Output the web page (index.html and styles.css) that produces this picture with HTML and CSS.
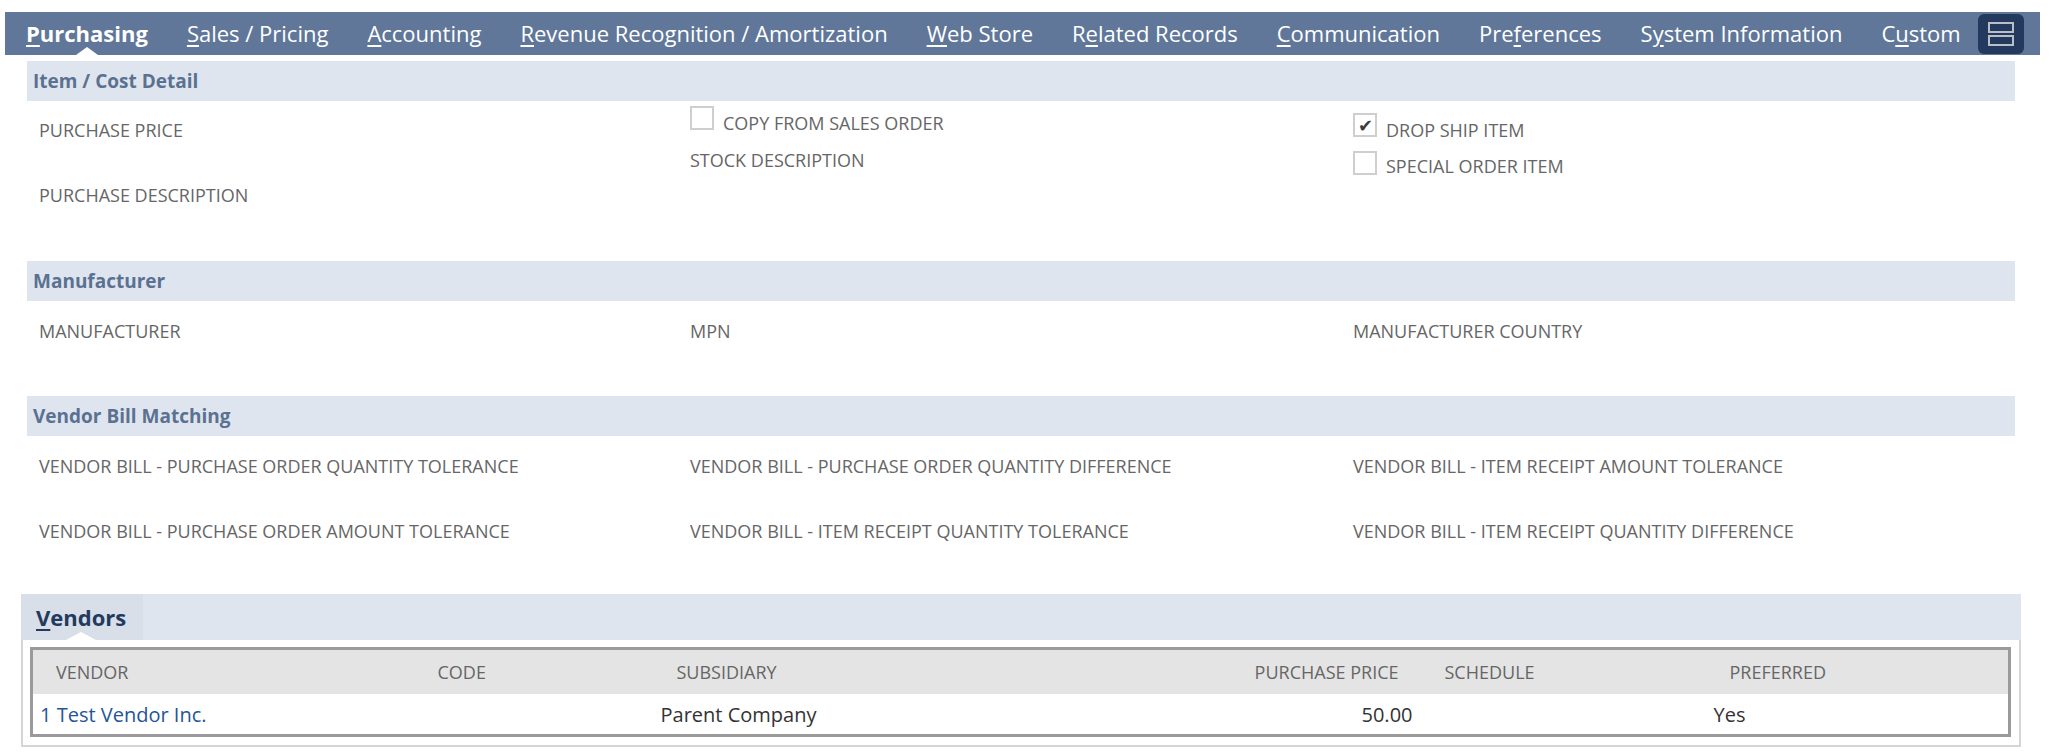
FILE: index.html
```html
<!DOCTYPE html>
<html lang="en">
<head>
  <meta charset="UTF-8" />
  <title>Item - Purchasing</title>
  <link rel="stylesheet" href="styles.css">
</head>
<body>
  <div class="page">
    <nav class="tabs">
      <div class="tab-list">
        <a class="tab active"><u>P</u>urchasing</a>
        <a class="tab"><u>S</u>ales / Pricing</a>
        <a class="tab"><u>A</u>ccounting</a>
        <a class="tab"><u>R</u>evenue Recognition / Amortization</a>
        <a class="tab"><u>W</u>eb Store</a>
        <a class="tab">R<u>e</u>lated Records</a>
        <a class="tab"><u>C</u>ommunication</a>
        <a class="tab">Pre<u>f</u>erences</a>
        <a class="tab">S<u>y</u>stem Information</a>
        <a class="tab">C<u>u</u>stom</a>
      </div>
      <button class="view-toggle" title="Toggle view">
        <svg width="26" height="26" viewBox="0 0 26 26">
          <rect x="1" y="2" width="24" height="9" fill="none" stroke="#b9bec7" stroke-width="2"/>
          <rect x="1" y="15" width="24" height="9" fill="none" stroke="#b9bec7" stroke-width="2"/>
        </svg>
      </button>
    </nav>

    <section class="group">
      <h2 class="group-title">Item / Cost Detail</h2>
      <div class="fields">
        <div class="col">
          <div class="field">PURCHASE PRICE</div>
          <div class="field tall">PURCHASE DESCRIPTION</div>
        </div>
        <div class="col">
          <label class="check copy"><span class="box"></span>COPY FROM SALES ORDER</label>
          <div class="field stock">STOCK DESCRIPTION</div>
        </div>
        <div class="col">
          <label class="check drop"><span class="box checked">&#10004;</span>DROP SHIP ITEM</label>
          <label class="check special"><span class="box"></span>SPECIAL ORDER ITEM</label>
        </div>
      </div>
    </section>

    <section class="group">
      <h2 class="group-title">Manufacturer</h2>
      <div class="fields single">
        <div class="col"><div class="field">MANUFACTURER</div></div>
        <div class="col"><div class="field">MPN</div></div>
        <div class="col"><div class="field">MANUFACTURER COUNTRY</div></div>
      </div>
    </section>

    <section class="group">
      <h2 class="group-title">Vendor Bill Matching</h2>
      <div class="fields grid">
        <div class="field">VENDOR BILL - PURCHASE ORDER QUANTITY TOLERANCE</div>
        <div class="field">VENDOR BILL - PURCHASE ORDER QUANTITY DIFFERENCE</div>
        <div class="field">VENDOR BILL - ITEM RECEIPT AMOUNT TOLERANCE</div>
        <div class="field">VENDOR BILL - PURCHASE ORDER AMOUNT TOLERANCE</div>
        <div class="field">VENDOR BILL - ITEM RECEIPT QUANTITY TOLERANCE</div>
        <div class="field">VENDOR BILL - ITEM RECEIPT QUANTITY DIFFERENCE</div>
      </div>
    </section>

    <section class="subtabs">
      <div class="subtab-bar">
        <a class="subtab active"><u>V</u>endors</a>
      </div>
      <div class="subtab-body">
        <table class="list">
          <colgroup>
            <col style="width:383px">
            <col style="width:239px">
            <col style="width:568px">
            <col style="width:200px">
            <col style="width:285px">
            <col>
          </colgroup>
          <thead>
            <tr>
              <th>VENDOR</th>
              <th>CODE</th>
              <th>SUBSIDIARY</th>
              <th class="num">PURCHASE PRICE</th>
              <th>SCHEDULE</th>
              <th>PREFERRED</th>
            </tr>
          </thead>
          <tbody>
            <tr>
              <td><a class="link">1 Test Vendor Inc.</a></td>
              <td></td>
              <td>Parent Company</td>
              <td class="num">50.00</td>
              <td></td>
              <td>Yes</td>
            </tr>
          </tbody>
        </table>
      </div>
    </section>
  </div>
</body>
</html>
```

FILE: styles.css
```css
:root {
  --bar: #607799;
  --group-bg: #dfe5ee;
  --group-text: #5a7191;
  --label: #666;
  --navy: #233a5e;
}
body {
  margin: 0;
  font-family: 'Open Sans', sans-serif;
  background: #fff;
  color: #333;
}
.page {
  padding: 12px 12px 0 5px;
}

/* main tab bar */
.tabs {
  display: flex;
  align-items: center;
  justify-content: space-between;
  height: 43px;
  padding: 0 16px 0 21px;
  background: var(--bar);
}
.tab-list {
  display: flex;
  gap: 39px;
}
.tab {
  position: relative;
  color: #fff;
  font-size: 22px;
  line-height: 43px;
  white-space: nowrap;
}
.tab.active {
  font-weight: 700;
}
.tab.active::after {
  content: "";
  position: absolute;
  left: 50%;
  bottom: 0;
  margin-left: -11px;
  border-left: 11px solid transparent;
  border-right: 11px solid transparent;
  border-bottom: 8px solid #fff;
}
.tab u, .subtab u {
  text-decoration-thickness: 2px;
  text-underline-offset: 3px;
}
.view-toggle {
  flex: none;
  width: 46px;
  height: 40px;
  border: none;
  border-radius: 6px;
  background: var(--navy);
  display: flex;
  align-items: center;
  justify-content: center;
  padding: 0;
}

/* field groups */
.group {
  margin: 6px 25px 0 22px;
}
.group-title {
  margin: 0;
  height: 40px;
  line-height: 40px;
  padding-left: 6px;
  background: var(--group-bg);
  color: var(--group-text);
  font-size: 19px;
  font-weight: 700;
}
.fields {
  display: grid;
  grid-template-columns: 651px 663px 1fr;
  padding: 0 0 0 12px;
  color: var(--label);
  font-size: 18px;
}
.fields .col {
  display: flex;
  flex-direction: column;
}
.field {
  line-height: 24px;
  margin-top: 17px;
}
.field.tall {
  margin-top: 41px;
  margin-bottom: 48px;
}
.field.stock {
  margin-top: 13px;
}
.check {
  display: flex;
  align-items: flex-start;
  gap: 9px;
  line-height: 24px;
}
.check.copy {
  margin-top: 10px;
}
.check.drop {
  margin-top: 17px;
}
.check.special {
  margin-top: 12px;
}
.box {
  flex: none;
  width: 24px;
  height: 24px;
  margin-top: -5px;
  border: 2px solid #cfcfcf;
  box-sizing: border-box;
  display: flex;
  align-items: center;
  justify-content: center;
  font-size: 18px;
  color: #3a3a3a;
  line-height: 1;
}
.check.special .box {
  margin-top: -3px;
}
.single {
  padding-bottom: 47px;
}
.single .field {
  margin-top: 18px;
}
.grid .field {
  margin-top: 18px;
}
.grid .field:nth-child(n+4) {
  margin-top: 41px;
  margin-bottom: 51px;
}

/* sub tabs */
.subtabs {
  margin: 0 19px 0 16px;
}
.subtab-bar {
  display: flex;
  height: 46px;
  background: var(--group-bg);
}
.subtab {
  position: relative;
  width: 122px;
  padding-left: 15px;
  box-sizing: border-box;
  background: #d8dfe9;
  color: var(--navy);
  font-size: 22px;
  font-weight: 700;
  line-height: 46px;
}
.subtab::after {
  content: "";
  position: absolute;
  left: 45px;
  bottom: 0;
  border-left: 15px solid transparent;
  border-right: 15px solid transparent;
  border-bottom: 8px solid #fff;
}
.subtab-body {
  border: 2px solid #d5d5d5;
  border-top: none;
  padding: 7px 8px 8px 7px;
}
.list {
  width: 100%;
  table-layout: fixed;
  border-collapse: collapse;
  border: 3px solid #9a9a9a;
}
.list th {
  background: #e4e4e4;
  color: var(--label);
  font-size: 18px;
  font-weight: 400;
  text-align: left;
  height: 44px;
  padding: 0 23px;
}
.list td {
  font-size: 20px;
  color: #333;
  height: 40px;
  padding: 0 9px 0 7px;
}
.list td.num {
  padding-right: 9px;
}
.list .num {
  text-align: right;
}
.link {
  color: #255597;
}
```
